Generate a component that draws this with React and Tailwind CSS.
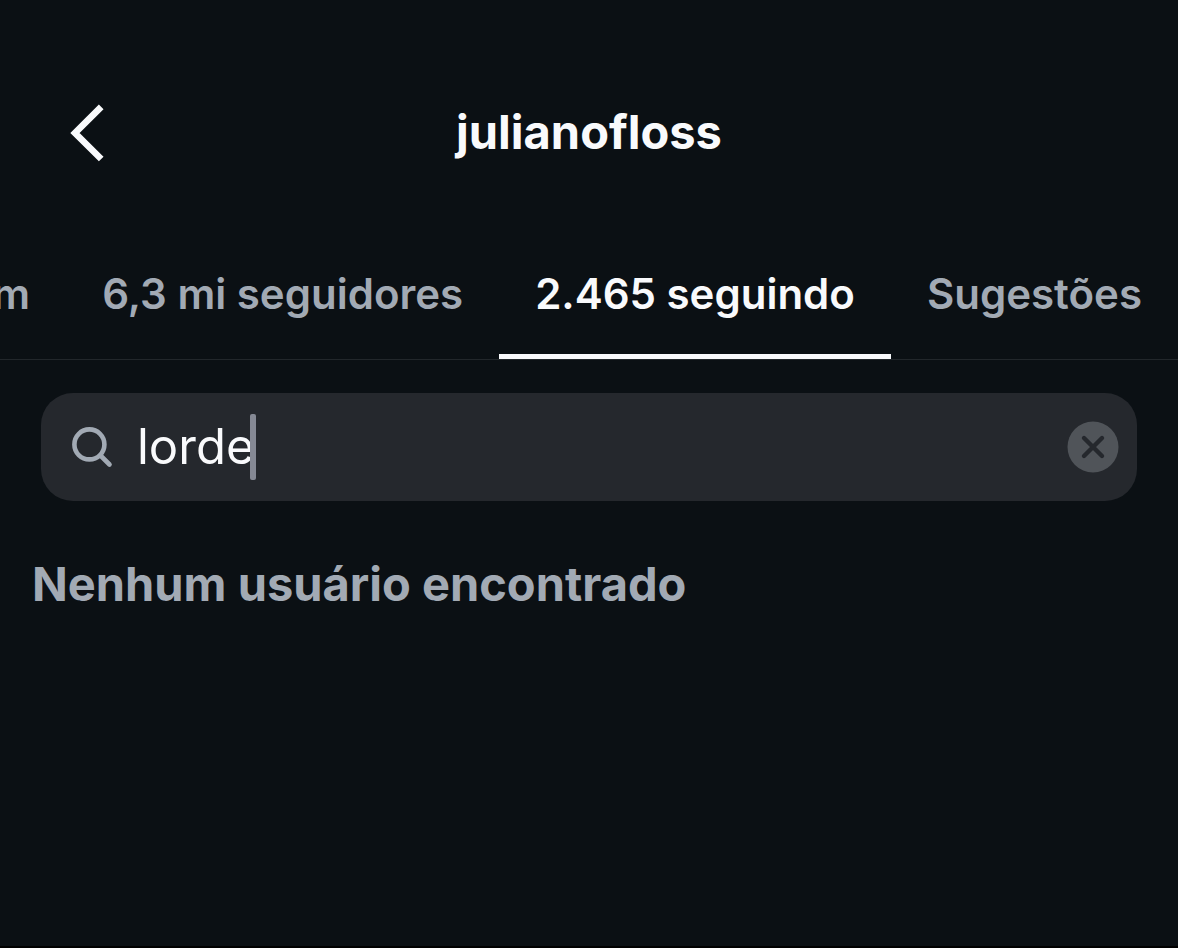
import { useState } from 'react'

const tabs = [
  { id: 'mutual', label: 'em comum' },
  { id: 'followers', label: '6,3 mi seguidores' },
  { id: 'following', label: '2.465 seguindo' },
  { id: 'suggested', label: 'Sugestões' },
]

const App = () => {
  const [active, setActive] = useState('following')
  const [query, setQuery] = useState('lorde')

  return (
    <div className="min-h-screen bg-[#0b1014] border-b-2 border-black font-['Inter','Liberation_Sans',sans-serif] text-[#f9fafc]">
      {/* Header */}
      <header className="grid grid-cols-[1fr_auto_1fr] items-center px-[70px] pt-[100px]">
        <button type="button" aria-label="Voltar" className="justify-self-start">
          <svg className="w-[34px] h-16" viewBox="0 0 34 64" fill="none" stroke="currentColor" strokeWidth="6.6">
            <path d="M31.2 6.8 5 33l26.2 26" />
          </svg>
        </button>
        <h1 className="text-[47px] leading-16 font-bold">julianofloss</h1>
      </header>

      {/* Tabs */}
      <nav className="mt-16 flex justify-end overflow-hidden border-b border-[#22272b]">
        {tabs.map((tab) => (
          <button
            key={tab.id}
            type="button"
            onClick={() => setActive(tab.id)}
            className={`shrink-0 whitespace-nowrap px-9 pt-[38px] pb-8 text-[42px] leading-14 font-semibold border-b-[5px] ${
              active === tab.id ? 'border-[#f9fafc]' : 'border-transparent text-[#a2aab4]'
            }`}
          >
            {tab.label}
          </button>
        ))}
      </nav>

      {/* Search */}
      <div className="mx-[41px] mt-[33px] flex h-[108px] items-center rounded-[32px] bg-[#25282d] pl-[30px] pr-[18px]">
        <label className="flex flex-1 items-center">
          <svg className="w-[42px] h-[42px] text-[#a2aab4]" viewBox="0 0 42 42" fill="none" stroke="currentColor" strokeWidth="4.6" strokeLinecap="round">
            <circle cx="18.4" cy="18.4" r="15" />
            <path d="M29.5 29.5 38.5 38.5" />
          </svg>
          <input
            type="text"
            aria-label="Pesquisar"
            value={query}
            onChange={(e) => setQuery(e.target.value)}
            className="ml-6 [field-sizing:content] bg-transparent text-[49px] leading-16 caret-transparent outline-none"
          />
          <span className="-ml-1 h-[66px] w-[6px] rounded-xs bg-[#858994]" />
        </label>
        <button type="button" aria-label="Limpar" onClick={() => setQuery('')}>
          <svg className="w-[52px] h-[52px]" viewBox="0 0 52 52" fill="none">
            <circle cx="26" cy="26" r="25.5" fill="#505459" />
            <path d="M17 17 35 35M35 17 17 35" stroke="#25282d" strokeWidth="4.4" strokeLinecap="round" />
          </svg>
        </button>
      </div>

      {/* Empty result */}
      <p className="mt-[51px] px-8 text-[47px] leading-16 font-bold text-[#a2aab4]">Nenhum usuário encontrado</p>
    </div>
  )
}

export default App
